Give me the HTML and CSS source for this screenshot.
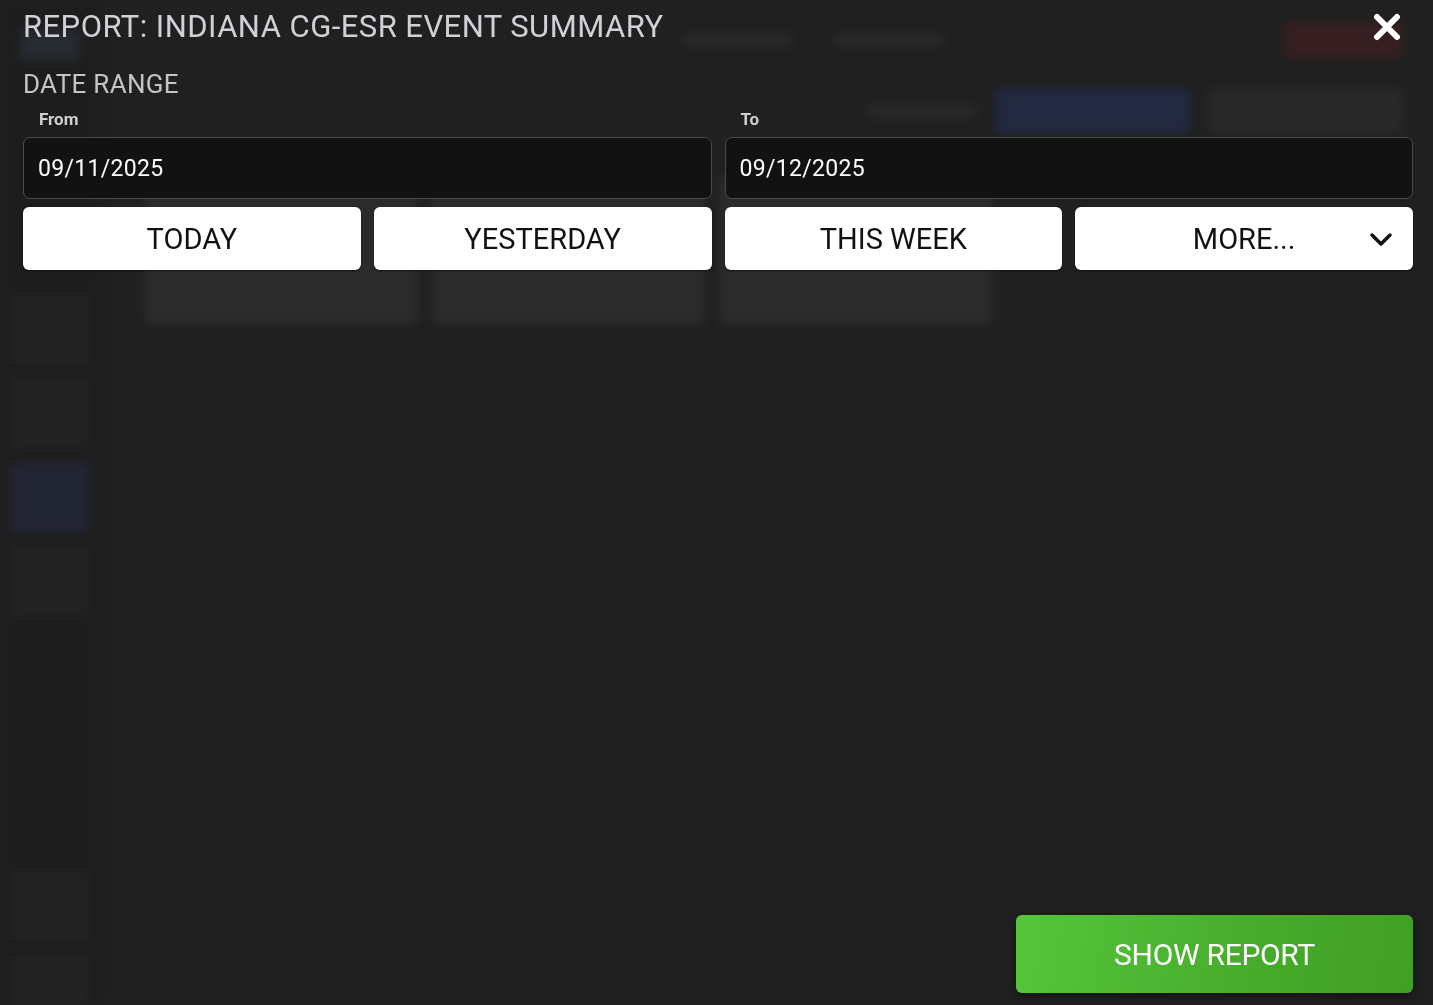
FILE: index.html
```html
<!DOCTYPE html>
<html lang="en">
<head>
  <meta charset="UTF-8">
  <meta name="viewport" content="width=device-width, initial-scale=1.0">
  <title>Report: Indiana CG-ESR Event Summary</title>
  <link rel="stylesheet" href="styles.css">
</head>
<body>
  <!-- blurred app behind the dialog -->
  <div class="backdrop" aria-hidden="true">
    <aside class="side">
      <div class="side-logo"></div>
      <div class="side-item"></div>
      <div class="side-item"></div>
      <div class="side-item active"></div>
      <div class="side-item"></div>
      <div class="side-spacer"></div>
      <div class="side-item"></div>
      <div class="side-item short"></div>
    </aside>
    <main class="app">
      <div class="app-top">
        <span class="ghost-text"></span>
        <span class="ghost-text"></span>
        <span class="ghost-red"></span>
      </div>
      <div class="app-tools">
        <span class="ghost-text"></span>
        <span class="ghost-blue"></span>
        <span class="ghost-grey"></span>
      </div>
      <div class="app-cards">
        <div class="ghost-card"></div>
        <div class="ghost-card"></div>
        <div class="ghost-card"></div>
      </div>
    </main>
  </div>

  <div class="dialog">
    <div class="dialog-head">
      <h1>REPORT: INDIANA CG-ESR EVENT SUMMARY</h1>
      <button class="close" aria-label="Close">
        <svg width="28" height="28" viewBox="0 0 28 28">
          <path d="M4 4 L24 24 M24 4 L4 24" stroke="#fff" stroke-width="6" stroke-linecap="round"/>
        </svg>
      </button>
    </div>

    <h2>DATE RANGE</h2>

    <div class="range">
      <div class="field">
        <label for="from">From</label>
        <input id="from" type="text" value="09/11/2025">
      </div>
      <div class="field">
        <label for="to">To</label>
        <input id="to" type="text" value="09/12/2025">
      </div>
    </div>

    <div class="presets">
      <button class="preset">TODAY</button>
      <button class="preset">YESTERDAY</button>
      <button class="preset">THIS WEEK</button>
      <button class="preset more">
        <span>MORE...</span>
        <svg class="chev" width="24" height="16" viewBox="0 0 24 16">
          <path d="M3 4 L12 13 L21 4" fill="none" stroke="#111" stroke-width="3.5" stroke-linecap="round" stroke-linejoin="round"/>
        </svg>
      </button>
    </div>

    <div class="dialog-foot">
      <button class="show">SHOW REPORT</button>
    </div>
  </div>
</body>
</html>
```

FILE: styles.css
```css
html, body {
  margin: 0;
  height: 100%;
}

body {
  font-family: Roboto, "Liberation Sans", Arial, sans-serif;
  background-color: #202020;
  color: #ccc;
  overflow: hidden;
}

/* ---- blurred page underneath ---- */

.backdrop {
  display: flex;
  height: 100%;
  filter: blur(5px);
  opacity: 0.55;
}

.side {
  width: 80px;
  padding: 20px 10px 0;
  display: flex;
  flex-direction: column;
  gap: 14px;
  background-color: #1c1c1c;
}

.side-logo {
  height: 30px;
  margin: 10px 10px 220px;
  background-color: #2c3440;
  border-radius: 4px;
}

.side-item {
  height: 70px;
  background-color: #262626;
  border-radius: 6px;
}

.side-item.active {
  background-color: #252a44;
}

.side-item.short {
  height: 50px;
}

.side-spacer {
  flex: 1;
}

.app {
  flex: 1;
  padding: 20px 30px 0 45px;
}

.app-top,
.app-tools {
  display: flex;
  align-items: center;
  gap: 40px;
  justify-content: flex-end;
  height: 40px;
}

.app-tools {
  margin-top: 28px;
  height: 46px;
  gap: 18px;
}

.ghost-text {
  width: 110px;
  height: 14px;
  background-color: #303030;
  border-radius: 3px;
}

.ghost-red {
  width: 120px;
  height: 36px;
  margin-left: 300px;
  background-color: #4a1e22;
  border-radius: 6px;
}

.ghost-blue {
  width: 195px;
  height: 46px;
  background-color: #24305a;
  border-radius: 6px;
}

.ghost-grey {
  width: 195px;
  height: 46px;
  background-color: #303030;
  border-radius: 6px;
}

.app-cards {
  display: flex;
  gap: 14px;
  margin-top: 40px;
}

.ghost-card {
  width: 273px;
  height: 150px;
  background-color: #353535;
  border-radius: 6px;
}

/* ---- dialog ---- */

.dialog {
  position: fixed;
  inset: 0;
  padding: 8px 20px 12px 23px;
  display: flex;
  flex-direction: column;
}

.dialog-head {
  display: flex;
  align-items: center;
  justify-content: space-between;
}

h1 {
  margin: 0;
  font-size: 31px;
  font-weight: 400;
  color: #d0d0d6;
  letter-spacing: 0.45px;
}

.close {
  background: none;
  border: none;
  padding: 0;
  margin-right: 12px;
  cursor: pointer;
  display: flex;
}

h2 {
  margin: 24px 0 0;
  font-size: 26px;
  font-weight: 400;
  color: #c4c4c8;
  letter-spacing: 0.3px;
}

.range {
  display: grid;
  grid-template-columns: 1fr 1fr;
  gap: 13px;
  margin-top: 10px;
}

.field {
  display: flex;
  flex-direction: column;
}

.field label {
  font-size: 17px;
  font-weight: 700;
  color: #cfcfcf;
  padding-left: 16px;
  margin-bottom: 8px;
}

.field input {
  height: 62px;
  box-sizing: border-box;
  padding: 0 14px;
  background-color: #121212;
  border: 1px solid #4a4a4a;
  border-radius: 7px;
  font-family: inherit;
  font-size: 23px;
  letter-spacing: 0.3px;
  color: #fff;
  outline: none;
}

.presets {
  display: grid;
  grid-template-columns: repeat(4, 1fr);
  gap: 13px;
  margin-top: 8px;
}

.preset {
  height: 63px;
  background-color: #fff;
  border: none;
  border-radius: 6px;
  font-family: inherit;
  font-size: 29px;
  color: #111;
  cursor: pointer;
  box-shadow: 0 1px 2px rgba(0, 0, 0, 0.5);
}

.preset.more {
  position: relative;
}

.chev {
  position: absolute;
  right: 20px;
  top: 24px;
}

.dialog-foot {
  margin-top: auto;
  display: flex;
  justify-content: flex-end;
}

.show {
  width: 397px;
  height: 78px;
  border: none;
  border-radius: 6px;
  background: linear-gradient(100deg, #55c63b 0%, #47ab2b 60%, #40a024 100%);
  box-shadow: 0 3px 8px rgba(0, 0, 0, 0.45);
  font-family: inherit;
  font-size: 30px;
  color: #fff;
  letter-spacing: -0.3px;
  cursor: pointer;
}
```
